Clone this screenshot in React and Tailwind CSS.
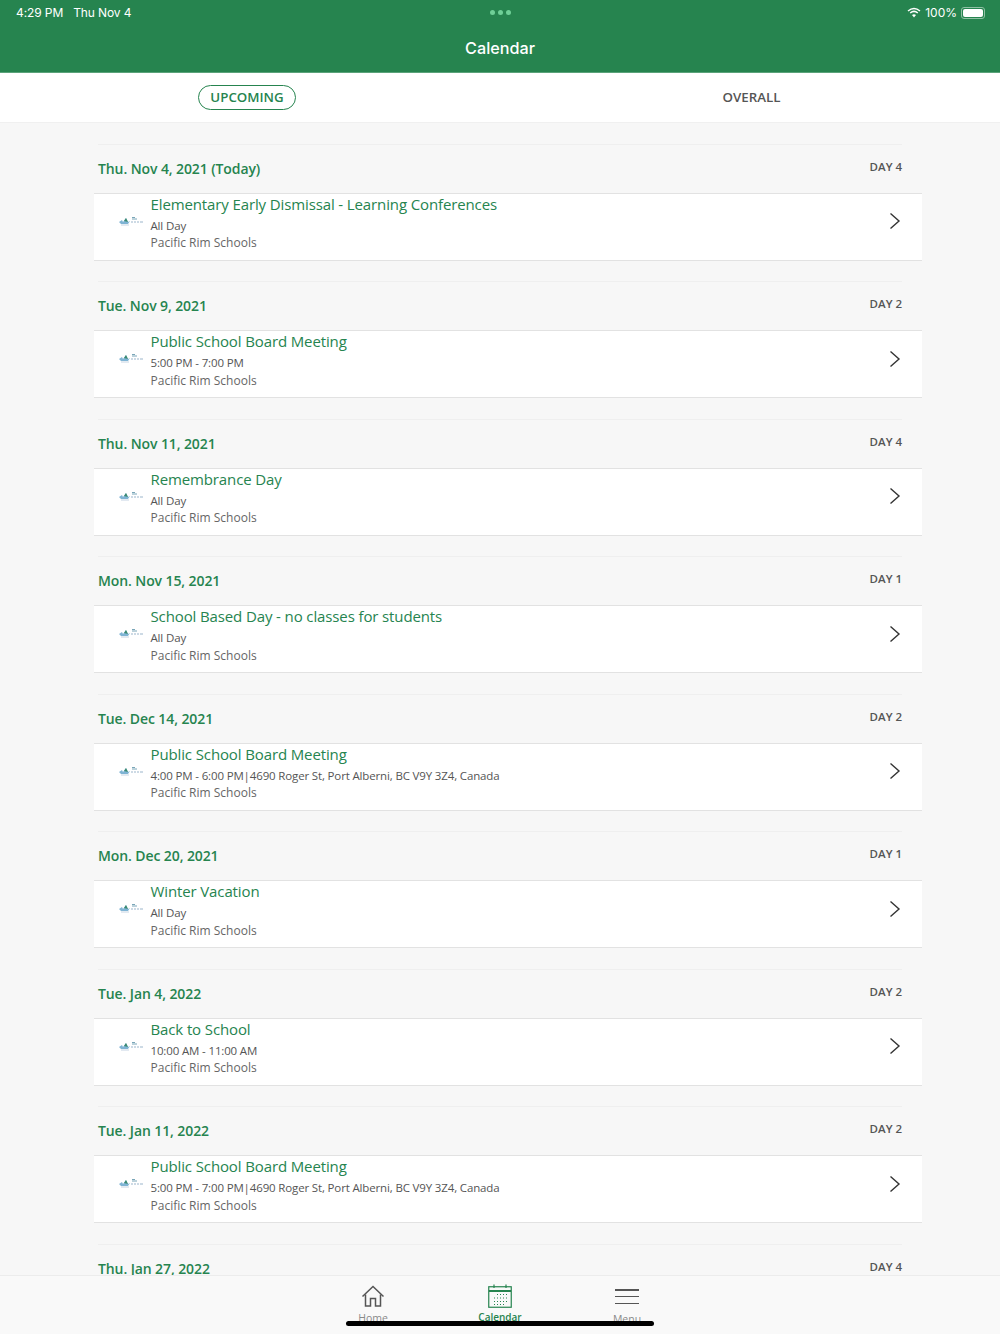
const events = [
  { date: "Thu. Nov 4, 2021 (Today)", day: "DAY 4", title: "Elementary Early Dismissal - Learning Conferences", time: "All Day" },
  { date: "Tue. Nov 9, 2021", day: "DAY 2", title: "Public School Board Meeting", time: "5:00 PM - 7:00 PM" },
  { date: "Thu. Nov 11, 2021", day: "DAY 4", title: "Remembrance Day", time: "All Day" },
  { date: "Mon. Nov 15, 2021", day: "DAY 1", title: "School Based Day - no classes for students", time: "All Day" },
  { date: "Tue. Dec 14, 2021", day: "DAY 2", title: "Public School Board Meeting", time: "4:00 PM - 6:00 PM|4690 Roger St, Port Alberni, BC V9Y 3Z4, Canada" },
  { date: "Mon. Dec 20, 2021", day: "DAY 1", title: "Winter Vacation", time: "All Day" },
  { date: "Tue. Jan 4, 2022", day: "DAY 2", title: "Back to School", time: "10:00 AM - 11:00 AM" },
  { date: "Tue. Jan 11, 2022", day: "DAY 2", title: "Public School Board Meeting", time: "5:00 PM - 7:00 PM|4690 Roger St, Port Alberni, BC V9Y 3Z4, Canada" },
  { date: "Thu. Jan 27, 2022", day: "DAY 4", title: "", time: "" },
];

function Logo() {
  return (
    <svg width="26" height="10" viewBox="0 0 26 10" className="shrink-0">
      <path d="M1 6 L4 4 L5 6 L8 2 L10 6 L12 5 L10 8 L3 8 Z" fill="#7fb4d4" />
      <path d="M6 5 L8 2 L10 6 Z" fill="#3c8a70" />
      <path d="M14 1.5h3M14 3h5" stroke="#7aa6b8" strokeWidth="1" />
      <path d="M13 6h2M16 6h2M19 6h2M22 6h3" stroke="#9bb6cc" strokeWidth="1.2" />
      <path d="M3 9h8" stroke="#b7c9dc" strokeWidth="0.8" />
    </svg>
  );
}

function Section({ e }) {
  return (
    <section className="h-[137.5px] shrink-0">
      <div className="ml-[4px] mr-[20px] h-px bg-[#efefef]" />
      <div className="h-[48px] pl-[4px] pr-[20px] flex justify-between">
        <span className="mt-[14px] text-[14px] tracking-[-0.1px] leading-[20px] font-semibold text-[#26844f]">{e.date}</span>
        <span className="mt-[14px] text-[11.5px] leading-[16px] font-[550] text-[#555]">{e.day}</span>
      </div>
      {e.title && (
        <div className="h-[68px] bg-white border-y border-[#e2e2e2] flex items-start relative">
          <div className="w-[56.5px] pl-[24px] pt-[22px] shrink-0"><Logo /></div>
          <div className="flex-1 min-w-0">
            <div className="text-[15px] tracking-[-0.12px] leading-[21px] text-[#26844f]">{e.title}</div>
            <div className="mt-[2px] text-[11.5px] tracking-[-0.15px] leading-[17px] text-[#555]">{e.time}</div>
            <div className="mt-[0.5px] text-[12px] leading-[17px] text-[#666]">Pacific Rim Schools</div>
          </div>
          <svg width="12" height="18" viewBox="0 0 12 18" fill="none" className="mr-[21px] mt-[18.5px] shrink-0">
            <path d="M1.5 1.5 L10 9 L1.5 16.5" stroke="#333" strokeWidth="1.4" />
          </svg>
        </div>
      )}
    </section>
  );
}

export default function App() {
  return (
    <div className="relative h-[1334px] w-[1000px] overflow-hidden flex flex-col bg-[#f7f7f7] font-['Open_Sans',sans-serif]">
      <header className="h-[73px] shrink-0 bg-[#26844f] border-b border-[#5ba37a] relative text-white font-['Inter',sans-serif]">
        <div className="h-[24px] pt-[1px] pl-[16px] pr-[15px] flex items-center justify-between text-[12px]">
          <div className="flex gap-[10px]"><span className="tracking-[-0.1px]">4:29 PM</span><span className="tracking-[-0.1px]">Thu Nov 4</span></div>
          <div className="flex items-center gap-[4px]">
            <svg width="14" height="11" viewBox="0 0 14 11" fill="none" stroke="white">
              <path d="M1 4 Q7 -1 13 4" strokeWidth="1.5" />
              <path d="M3.2 6 Q7 2.8 10.8 6" strokeWidth="1.5" />
              <path d="M7 10.5 L5 8 Q7 6.5 9 8 Z" fill="white" stroke="none" />
            </svg>
            <span>100%</span>
            <div className="w-[24px] h-[12px] rounded-[3px] border border-[#8fc0a4] p-[1px] flex">
              <div className="flex-1 bg-white rounded-[2px]" />
            </div>
          </div>
        </div>
        <div className="absolute top-[10px] left-[490px] flex gap-[3px]">
          <span className="w-[5px] h-[5px] rounded-full bg-[#6fcf97]" />
          <span className="w-[5px] h-[5px] rounded-full bg-[#6fcf97]" />
          <span className="w-[5px] h-[5px] rounded-full bg-[#6fcf97]" />
        </div>
        <div className="text-center text-[16.2px] leading-[24px] font-medium mt-[12px]">Calendar</div>
      </header>

      <nav className="h-[49.5px] shrink-0 bg-white border-b border-[#f0f0f0] pt-[1px] grid grid-cols-2 items-center text-[13.3px] font-[550]">
        <div className="flex justify-center">
          <span className="ml-[-6px] h-[25px] w-[98px] rounded-full border border-[#26844f] text-[#26844f] flex items-center justify-center">UPCOMING</span>
        </div>
        <div className="flex justify-center text-[#555]"><span className="ml-[3px]">OVERALL</span></div>
      </nav>

      <main className="flex-1 min-h-0 overflow-hidden pt-[21px] pl-[94px] pr-[78px] flex flex-col">
        {events.map((e, i) => <Section key={i} e={e} />)}
      </main>

      <footer className="absolute bottom-0 left-0 right-0 h-[59px] bg-[#f9f9f9] border-t border-[#ececec]">
        <div className="flex justify-center h-full">
          <div className="w-[127px] flex flex-col items-center pt-[9px] text-[#8a8a8a]">
            <svg width="24" height="23" viewBox="0 0 24 23" fill="none" stroke="#555" strokeWidth="1.5">
              <path d="M1.5 11.5 L12 1.5 L22.5 11.5" />
              <path d="M4.5 9.5 V21 H9.5 V13.5 H14.5 V21 H19.5 V9.5" />
            </svg>
            <span className="text-[10.5px] leading-[14px] mt-[3px]">Home</span>
          </div>
          <div className="w-[127px] flex flex-col items-center pt-[8px] text-[#26844f]">
            <svg width="24" height="24" viewBox="0 0 24 24" fill="none" stroke="#26844f">
              <rect x="0.75" y="2.75" width="22.5" height="20.5" strokeWidth="1.2" />
              <path d="M1 7H23" strokeWidth="2" />
              <path d="M6 0.5V4M18 0.5V4" strokeWidth="1.2" />
              <path d="M9 10.5h1M12 10.5h1M15 10.5h1M18 10.5h1M6 14h1M9 14h1M12 14h1M15 14h1M18 14h1M6 17.5h1M9 17.5h1M12 17.5h1M15 17.5h1M18 17.5h1M6 20.5h1M9 20.5h1M12 20.5h1M15 20.5h1" strokeWidth="1" />
            </svg>
            <span className="text-[10px] leading-[14px] mt-[2px] font-semibold">Calendar</span>
          </div>
          <div className="w-[127px] flex flex-col items-center pt-[13px] text-[#8a8a8a]">
            <div className="w-[24px] h-[15px] flex flex-col justify-between">
              <div className="h-[1.5px] bg-[#555]" />
              <div className="h-[1.5px] bg-[#555]" />
              <div className="h-[1.5px] bg-[#555]" />
            </div>
            <span className="text-[10.5px] leading-[14px] mt-[8px]">Menu</span>
          </div>
        </div>
        <div className="absolute left-[346px] bottom-[8px] w-[308px] h-[5px] rounded-full bg-black" />
      </footer>
    </div>
  );
}
